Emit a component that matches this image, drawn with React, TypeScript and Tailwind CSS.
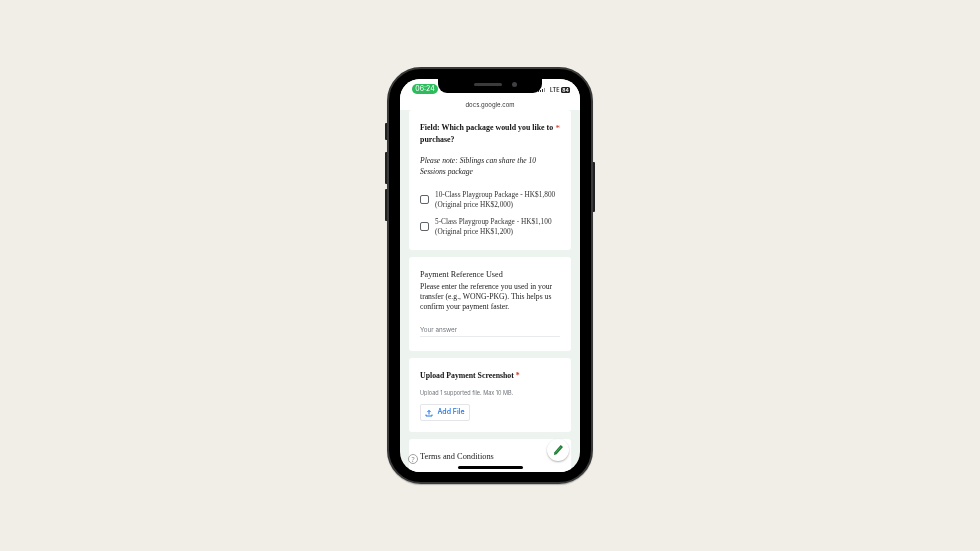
import React from "react";

const serif = "font-['Liberation_Serif','DejaVu_Serif',serif]";
const sans = "font-['Inter','Liberation_Sans',sans-serif]";

function Check({ l1, l2 }: { l1: string; l2: string }) {
  return (
    <div className="flex items-center h-[27px]">
      <div className="w-[7px] h-[7px] box-content border-[1.5px] border-[#5f6368] rounded-[2px] shrink-0" />
      <div className={`ml-[6px] text-[7.3px] leading-[10px] text-[#333] whitespace-nowrap ${serif}`}>
        <div>{l1}</div>
        <div>{l2}</div>
      </div>
    </div>
  );
}

export default function App() {
  return (
    <div className="w-[980px] h-[551px] bg-[#f1eee7] flex items-center justify-center overflow-hidden">
      <div className="relative w-[206px] h-[417px] will-change-transform">
        <div className="absolute left-[-2px] top-[56px] w-[2px] h-[17px] bg-[#222] rounded-l-[1px]" />
        <div className="absolute left-[-2px] top-[85px] w-[2px] h-[32px] bg-[#222] rounded-l-[1px]" />
        <div className="absolute left-[-2px] top-[122px] w-[2px] h-[32px] bg-[#222] rounded-l-[1px]" />
        <div className="absolute right-[-2px] top-[95px] w-[2px] h-[50px] bg-[#222] rounded-r-[1px]" />
        <div className="w-full h-full rounded-[34px] bg-black border-[2px] border-[#3a3a3a] p-[10px] shadow-[0_1px_1px_rgba(0,0,0,0.25)]">
          <div className="relative w-[180px] h-[393px] mx-auto rounded-[20px] bg-[#edf3ee] overflow-hidden flex flex-col">
            <div className="bg-white h-[31px] shrink-0 relative">
              <div className="absolute left-[38px] top-0 w-[104px] h-[14px] bg-black rounded-b-[9px] flex items-start justify-center pt-[3.5px] pl-[11px]">
                <div className="w-[28px] h-[3px] rounded-full bg-[#3b3b3b] mr-[10px]" />
                <div className="w-[5px] h-[5px] -mt-[1px] rounded-full bg-[#3f4045]" />
              </div>
              <div className={`absolute left-[12px] top-[5px] w-[26px] h-[10px] rounded-full bg-[#2dbb5d] text-white text-[7px] leading-[10px] text-center ${sans}`}>06:24</div>
              <div className="absolute left-[138px] top-[9px] flex items-end gap-[1px] h-[4px]">
                <div className="w-[1px] h-[1px] bg-[#333]" />
                <div className="w-[1px] h-[2px] bg-[#333]" />
                <div className="w-[1px] h-[3px] bg-[#333]" />
                <div className="w-[1px] h-[4px] bg-[#999]" />
              </div>
              <div className={`absolute left-[150px] top-[8px] text-[5.5px] leading-[7px] font-semibold text-[#222] ${sans}`}>LTE</div>
              <div className={`absolute left-[161px] top-[8px] w-[9px] h-[6px] rounded-[1.5px] bg-[#222] text-white text-[5px] leading-[6px] text-center font-semibold ${sans}`}>84</div>
              <div className={`absolute inset-x-0 top-[21px] text-center text-[6px] leading-[9px] text-[#333] ${sans}`}>docs.google.com</div>
            </div>

            <div className="px-[9px] flex flex-col gap-[7px]">
              <div className="bg-white rounded-[3px] h-[140px] pt-[12px] px-[11px] shrink-0">
                <div className="flex items-start">
                  <div className={`text-[7.9px] leading-[11.5px] font-bold text-[#111] w-[136px] ${serif}`}>
                    <div className="whitespace-nowrap">Field: Which package would you like to</div>
                    <div>purchase?</div>
                  </div>
                  <div className={`ml-[1px] text-[9px] leading-[12px] text-[#d93025] ${serif}`}>*</div>
                </div>
                <div className={`mt-[10px] text-[7.6px] leading-[11px] italic text-[#222] whitespace-nowrap ${serif}`}>
                  <div>Please note: Siblings can share the 10</div>
                  <div>Sessions package</div>
                </div>
                <div className="mt-[9px]">
                  <Check l1="10-Class Playgroup Package - HK$1,800" l2="(Original price HK$2,000)" />
                  <Check l1="5-Class Playgroup Package - HK$1,100" l2="(Original price HK$1,200)" />
                </div>
              </div>

              <div className="bg-white rounded-[3px] h-[94px] pt-[12px] px-[11px] shrink-0">
                <div className={`text-[8.2px] leading-[12px] text-[#222] ${serif}`}>Payment Reference Used</div>
                <div className={`mt-[1px] text-[7.7px] leading-[10px] text-[#222] whitespace-nowrap ${serif}`}>
                  <div>Please enter the reference you used in your</div>
                  <div>transfer (e.g., WONG-PKG). This helps us</div>
                  <div>confirm your payment faster.</div>
                </div>
                <div className={`mt-[14px] h-[11px] border-b border-[#e8eaed] text-[6.3px] leading-[9px] text-[#70757a] ${sans}`}>Your answer</div>
              </div>

              <div className="bg-white rounded-[3px] h-[74px] pt-[12px] px-[11px] shrink-0">
                <div className={`text-[7.8px] leading-[12px] font-bold text-[#111] whitespace-nowrap ${serif}`}>
                  Upload Payment Screenshot <span className="text-[#d93025]">*</span>
                </div>
                <div className={`mt-[8px] text-[5.5px] leading-[7px] text-[#70757a] ${sans}`}>Upload 1 supported file. Max 10 MB.</div>
                <div className={`mt-[7px] w-[50px] h-[17px] rounded-[2px] border border-[#e3e5e8] flex items-center justify-center gap-[4px] text-[#1a73e8] text-[7px] font-medium ${sans}`}>
                  <svg width="8" height="8" viewBox="0 0 8 8" fill="none" stroke="#1a73e8" strokeWidth="1">
                    <path d="M4 5.5V1.5M2.3 3.1 4 1.4l1.7 1.7M1 5.5v1.5h6V5.5" />
                  </svg>
                  Add File
                </div>
              </div>

              <div className="bg-white rounded-[3px] h-[60px] pt-[12px] px-[11px] shrink-0">
                <div className={`text-[8.4px] leading-[12px] text-[#222] ${serif}`}>Terms and Conditions</div>
              </div>
            </div>

            <div className="absolute left-[8px] top-[375px] w-[10px] h-[10px] rounded-full border border-[#a0a0a0] text-[#8a8a8a] text-[7px] leading-[9px] text-center">?</div>
            <div className="absolute left-[147px] top-[360px] w-[22px] h-[22px] rounded-full bg-white shadow-[0_1px_2px_rgba(0,0,0,0.3)] flex items-center justify-center">
              <svg width="11" height="12" viewBox="0 0 11 12" fill="#1e7e34">
                <path d="M7.7 1 10 3 3.6 10.3 1 11l.4-2.8z" />
                <path d="M2.6 8.8 7.9 2.8" stroke="#7fc08f" strokeWidth="0.5" />
              </svg>
            </div>
            <div className="absolute left-[58px] top-[387px] w-[65px] h-[2.5px] rounded-full bg-black" />
          </div>
        </div>
      </div>
    </div>
  );
}
